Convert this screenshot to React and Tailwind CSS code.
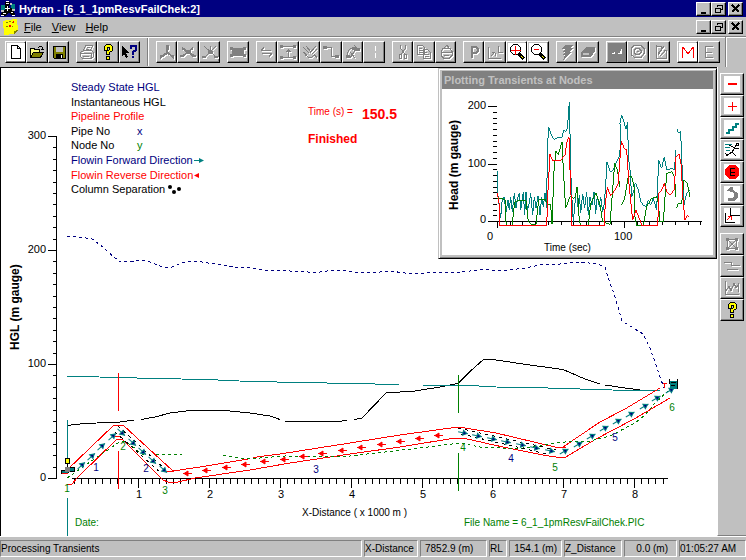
import clsx from 'clsx';

const UI_FONT = "font-['Liberation_Sans',Arial,sans-serif]";

/* Icons, all on a 16 x 16 grid */

function Icon({ children, dim }) {
  return (
    <svg
      viewBox="0 0 16 16"
      className={clsx('size-4 shrink-0', dim && 'drop-shadow-[1px_1px_0_#fff]')}
      fill="none"
      stroke={dim ? '#808080' : '#000'}
      shapeRendering="crispEdges"
      aria-hidden="true"
    >
      {children}
    </svg>
  );
}

const QuestionMark = () => (
  <Icon>
    <path d="M4.500 6.500v-4l2-2h4l2 2v4l-3 2v2h-3v-3l3-2v-2h-2v3z" fill="#ff0" />
    <path d="M6.500 12.500h3v3h-3z" fill="#ff0" />
  </Icon>
);

const icons = {
  newFile: (
    <Icon>
      <path d="M3.500 1.500h6l3 3v10h-9z" fill="#fff" />
      <path d="M9.500 1.500v3h3" />
    </Icon>
  ),
  open: (
    <Icon>
      <path d="M9 3.500h1M10 2.500h3M13.500 3v3M12 5.500h3" />
      <path d="M1.500 13.500v-9h4v1h5v3" fill="#ffff80" />
      <path d="M1.500 13.500l3-5h10l-3 5z" fill="#808000" />
    </Icon>
  ),
  save: (
    <Icon>
      <path d="M2.500 2.500h12v12h-11l-1-1z" fill="#808000" />
      <path d="M5 3h7v5H5z" fill="#c0c0c0" stroke="none" />
      <path d="M5 10h7v4H5z" fill="#000" stroke="none" />
      <path d="M10 11h1v3h-1z" fill="#fff" stroke="none" />
    </Icon>
  ),
  print: (
    <Icon dim>
      <path d="M4.500 6.500l2-5h7l-2 5M8 3.500h3M7 5.500h3M1.500 8.500l3-2h8l2 2v4l-2 2h-9l-2-2zM2 9.500h10M4 12.500h6M12.500 9v5" />
    </Icon>
  ),
  help: <QuestionMark />,
  contextHelp: (
    <Icon>
      <path d="M0 2v10l2-2 2 4 2-1-2-4h3z" fill="#000" stroke="none" />
      <path d="M9 5V2h5v4l-3 2v3M11 12v2" stroke="#000080" strokeWidth="2" />
    </Icon>
  ),
  node: (
    <Icon dim>
      <path d="M7 1h3v5H7z" fill="#808080" stroke="none" />
      <path d="M8 6v3l-6 4M9 9l5 4" strokeWidth="2" />
      <path d="M1.500 11v4M14.500 11v4" />
    </Icon>
  ),
  branch: (
    <Icon dim>
      <path d="M2 4l12 8M13 4L3 12" strokeWidth="2" />
      <path d="M7 6h4v4H7zM0 11h4v2H0zM12 11h4v2h-4z" fill="#808080" stroke="none" />
    </Icon>
  ),
  cross: (
    <Icon dim>
      <path d="M2 2l12 11M14 2L3 13" />
      <path d="M8.500 2v6" />
      <path d="M6 7h5v3H6zM0 12h4v2H0zM12 12h4v2h-4z" fill="#808080" stroke="none" />
    </Icon>
  ),
  pipe: (
    <Icon dim>
      <path d="M2 4h12v8H2zM0 3h3v3H0zM13 3h3v3h-3zM0 10h3v3H0zM13 10h3v3h-3z" fill="#808080" stroke="none" />
    </Icon>
  ),
  swap: (
    <Icon dim>
      <path d="M2 6.500h10M5 3.500l-3 3M3 9.500h10M10 12.500l3-3" />
    </Icon>
  ),
  spacing: (
    <Icon dim>
      <path d="M0 2.500h16M0 13.500h16M8.500 5v8M6 7.500h5M7 6.500h3" />
      <path d="M0 1h3v3H0zM13 1h3v3h-3zM0 12h3v3H0zM13 12h3v3h-3z" fill="#808080" stroke="none" />
    </Icon>
  ),
  hand: (
    <Icon dim>
      <path d="M1 3l6 6M4 2l5 6M14 2L8 9M15 5l-5 5M1 8l4 3M3 11l5 3 5-3M12 10l3 4" />
    </Icon>
  ),
  route: (
    <Icon dim>
      <path d="M3 3.500h5.500v9H14" />
      <path d="M0 2h4v3H0zM12 11h4v3h-4z" fill="#808080" stroke="none" />
    </Icon>
  ),
  rotate: (
    <Icon dim>
      <path d="M2 12c1-8 7-11 11-6M9 1l4 4M5 8l5 6M5 14l6-9" />
      <path d="M1 11h4v3H1zM11 4h4v3h-4zM7 3h3v3H7z" fill="#808080" stroke="none" />
    </Icon>
  ),
  dash: (
    <Icon>
      <path d="M9.500 2v5M9.500 9v5" stroke="#fff" />
    </Icon>
  ),
  cut: (
    <Icon dim>
      <path d="M5.500 1v3l5 7M10.500 1v3l-5 7" />
      <path d="M4.500 10.500h2v4h-2zM9.500 10.500h2v4h-2z" />
    </Icon>
  ),
  copy: (
    <Icon dim>
      <path d="M1.500 1.500h5l2 2v7h-7zM3 4.500h3M3 6.500h4M3 8.500h4" />
      <path d="M7.500 5.500h4l3 3v6h-7zM9 8.500h2M9 10.500h4M9 12.500h4" />
    </Icon>
  ),
  paste: (
    <Icon dim>
      <path d="M5 4.500h7l2 3v4l-3 3H6l-3-3v-4zM6 4l3-3 2 3M3 8.500h11M6 11.500h5" />
    </Icon>
  ),
  profile: (
    <Icon dim>
      <path d="M6 14V3h4l2 2v2l-2 2H6" strokeWidth="2" />
    </Icon>
  ),
  axes: (
    <Icon dim>
      <path d="M1.500 3v11H14M4 12l4-4M5 8.500h3M8.500 9v3M11.500 2v6H16" />
    </Icon>
  ),
  zoomIn: (
    <Icon>
      <path d="M4.500 .500h4l3 3v4l-3 3h-4l-3-3v-4z" fill="#fff" />
      <path d="M6.500 2v9M2 6.500h10" stroke="#f00" />
      <path d="M10 10l5 5" strokeWidth="3" />
      <path d="M12 12l2 2" stroke="#ff0" />
    </Icon>
  ),
  zoomOut: (
    <Icon>
      <path d="M4.500 .500h4l3 3v4l-3 3h-4l-3-3v-4z" fill="#fff" />
      <path d="M4 5.500h5" stroke="#f00" />
      <path d="M10 10l5 5" strokeWidth="3" />
      <path d="M12 12l2 2" stroke="#ff0" />
    </Icon>
  ),
  bolt: (
    <Icon dim>
      <path d="M6 1h8l-3 3h3l-3 4h2l-9 8 2-5H3l3-3H3l3-3H3z" fill="#808080" stroke="none" />
    </Icon>
  ),
  eraser: (
    <Icon dim>
      <path d="M6 3h9v4l-4 6H1V9z" fill="#808080" stroke="none" />
      <path d="M3 9h6v2H3z" fill="#c0c0c0" stroke="none" />
    </Icon>
  ),
  graph: (
    <Icon>
      <path d="M-1-1h18v18H-1z" fill="#808080" stroke="none" />
      <path d="M3 9h3v1H3zM5 8h1v1H5zM9 9h4v1H9zM11 7h2v2h-2zM12 5h1v2h-1z" fill="#fff" stroke="none" />
    </Icon>
  ),
  contour: (
    <Icon dim>
      <path d="M8 1.500h3l3 3v5l-3 4H5l-4-3v-6l3-3zM8 4.500H6l-2 2v2l2 2h3l2-2v-2l-2-2zM7 7.500h2" />
    </Icon>
  ),
  results: (
    <Icon dim>
      <path d="M4.500 1v13H15M5 2.500h4v4L6 9M12 2L6 11M12 6.500h2v7M8 12l5-5" />
    </Icon>
  ),
  m: (
    <Icon>
      <path d="M2.500 14V3M3 3l5 7 5-7M13.500 3v11" stroke="#f00" />
    </Icon>
  ),
  e: (
    <Icon dim>
      <path d="M12 2.500H4.500v11H12M5 8.500h6" />
    </Icon>
  ),
  minus: (
    <Icon>
      <path d="M4 8h9" stroke="#f00" strokeWidth="2" />
    </Icon>
  ),
  plus: (
    <Icon>
      <path d="M4 8.500h9M8.500 4v9" stroke="#f00" />
    </Icon>
  ),
  steps: (
    <Icon>
      <path d="M2 13h3v-3h4V7h3V4h3" stroke="#008080" strokeWidth="2" />
    </Icon>
  ),
  runner: (
    <Icon>
      <path d="M1 2.500h7M1 5.500h5M2 8.500h4" stroke="#008080" />
      <path d="M5 3l6 3 4 1M11 6l-3 4 4 4M8 10l-6 4M1 11l2 2M11 5l3-4M12.500 1.500h2v2h-2z" />
    </Icon>
  ),
  stop: (
    <Icon>
      <path d="M5 1h6l4 4v6l-4 4H5l-4-4V5z" fill="#f00" stroke="none" />
      <path d="M11 4.500H6.500v7H11M7 8.500h4" />
    </Icon>
  ),
  undo: (
    <Icon>
      <path d="M6 1L2 5h3l5 2v3l-2 2H4v3h6l4-3V7l-5-3V1z" fill="#808080" stroke="none" />
    </Icon>
  ),
  origin: (
    <Icon>
      <path d="M6.500 0v7H16M1.500 5v9.500H11" />
      <path d="M3 12l4-4M4 8.500h3.500V12" stroke="#f00" />
    </Icon>
  ),
  frame: (
    <Icon dim>
      <path d="M3.500 3.500h9v9h-9zM4 4l8 8M12 4l-8 8" />
      <path d="M2 2h3v3H2zM11 2h3v3h-3zM2 11h3v3H2zM11 11h3v3h-3z" fill="#808080" stroke="none" />
    </Icon>
  ),
  levels: (
    <Icon dim>
      <path d="M0 4.500h7M7.500 4v4M7 7.500h9M3 11.500h11" />
    </Icon>
  ),
  wave: (
    <Icon dim>
      <path d="M1.500 1v13.500H15M2 11l3-5 2 5 3-8 2 5 2-3v7" />
    </Icon>
  ),
  yellowHelp: <QuestionMark />,
};

const toolGroups = [
  { columns: 'grid-cols-[21px_22px_21px]', tools: ['newFile', 'open', 'save'] },
  { columns: 'grid-cols-[21px_22px_21px]', tools: ['print', 'help', 'contextHelp'] },
  { divider: true },
  { columns: 'grid-cols-[21px_22px_21px]', tools: ['node', 'branch', 'cross'] },
  { columns: 'grid-cols-[22px]', tools: ['pipe'] },
  {
    columns: 'grid-cols-[21px_22px_21px_22px_21px_22px]',
    tools: ['swap', 'spacing', 'hand', 'route', 'rotate', 'dash'],
  },
  { columns: 'grid-cols-[21px_22px_21px]', tools: ['cut', 'copy', 'paste'] },
  { columns: 'grid-cols-[21px_22px_21px_22px]', tools: ['profile', 'axes', 'zoomIn', 'zoomOut'] },
  { columns: 'grid-cols-[21px_22px]', tools: ['bolt', 'eraser'] },
  { columns: 'grid-cols-[21px_22px_21px]', tools: ['graph', 'contour', 'results'] },
  { columns: 'grid-cols-[21px_22px]', tools: ['m', 'e'] },
];

const whiteFace = ['newFile', 'zoomIn', 'zoomOut', 'm', 'minus', 'plus', 'steps', 'runner', 'stop', 'undo', 'origin'];

function ToolButton({ name, wide }) {
  return (
    <button
      type="button"
      aria-label={name}
      className={clsx(
        'flex h-[22px] items-center border border-t-white border-r-black border-b-black border-l-white bg-[#c0c0c0] p-px shadow-[inset_-1px_-1px_0_#808080]',
        wide && 'justify-center'
      )}
    >
      <span
        className={clsx(
          'block',
          !wide && 'p-px',
          name === 'graph' && 'bg-[#808080]',
          whiteFace.includes(name) && 'bg-white'
        )}
      >
        {icons[name]}
      </span>
    </button>
  );
}

function WindowButtons() {
  const face =
    'flex h-[14px] w-[15px] items-center justify-center border border-t-white border-l-white border-r-black border-b-black bg-[#c0c0c0] shadow-[inset_-1px_-1px_0_#808080]';
  return (
    <div className="flex pr-[3px]">
      <button type="button" aria-label="Minimize" className={face}>
        <svg viewBox="0 0 10 10" className="size-[10px]" shapeRendering="crispEdges">
          <path d="M2 8h5v2H2z" />
        </svg>
      </button>
      <button type="button" aria-label="Restore" className={face}>
        <svg viewBox="0 0 10 10" className="size-[10px]" fill="none" stroke="#000" shapeRendering="crispEdges">
          <path d="M3.500 3V1.500h5v4H7M3 1h6M1.500 4.500h5v4h-5zM1 4h6" />
        </svg>
      </button>
      <button type="button" aria-label="Close" className={clsx(face, 'ml-0.5')}>
        <svg viewBox="0 0 10 10" className="size-[10px]" stroke="#000" strokeWidth="2" shapeRendering="crispEdges">
          <path d="M1 1l7 7M8 1L1 8" />
        </svg>
      </button>
    </div>
  );
}

/* Main profile plot */

const forwardArrows = [
  [82, 465, -42], [92, 456, -42], [102, 446, -42], [113, 436, -42],
  [122, 433, 42], [133, 443, 42], [143, 452, 42], [153, 461, 42], [164, 470, 42],
  [464, 433, 12], [478, 436, 12], [493, 439, 12], [507, 442, 12], [522, 445, 12], [536, 448, 12], [551, 451, 12],
  [565, 451, -30], [579, 444, -30], [592, 436, -30], [605, 428, -30], [618, 421, -30],
  [631, 414, -30], [645, 406, -30], [657, 398, -30], [671, 390, -30],
];

const reverseArrows = [
  [187, 473], [206, 470], [226, 467], [245, 464], [264, 461], [284, 459], [303, 456],
  [322, 453], [342, 450], [361, 447], [381, 444], [400, 441], [419, 438], [438, 435],
];

const pipeLabels = [[96, 471, '1'], [146, 472, '2'], [316, 473, '3'], [511, 462, '4'], [615, 441, '5']];
const nodeLabels = [[67, 492, '1'], [123, 450, '2'], [165, 494, '3'], [463, 451, '4'], [555, 471, '5'], [672, 411, '6']];

const legend = [
  ['Steady State HGL', '#000080'],
  ['Instantaneous HGL', '#000'],
  ['Pipeline Profile', '#f00'],
  ['Pipe No', '#000'],
  ['Node No', '#000'],
  ['Flowin Forward Direction', '#000080'],
  ['Flowin Reverse Direction', '#f00'],
  ['Column Separation', '#000'],
];

function ProfilePlot() {
  const yTicks = Array.from({ length: 31 }, (_, i) => i);
  const xTicks = Array.from({ length: 84 }, (_, i) => i + 1);

  return (
    <svg
      viewBox="1 68 716 468"
      className="block h-auto w-full"
      fontFamily="'Liberation Sans', Arial, sans-serif"
      fontSize="11"
      role="img"
      aria-label="HGL profile"
    >
      {legend.map(([label, color], i) => (
        <text key={label} x="71" y={Math.round(91 + i * 14.6)} fill={color}>
          {label}
        </text>
      ))}
      <text x="137" y="135" fill="#000080">x</text>
      <text x="137" y="149" fill="#008000">y</text>
      <path d="M194 160.500h7" stroke="#008080" />
      <path d="M199 158l5 2.500-5 2.500z" fill="#008080" />
      <path d="M199 173v5l-5-2.500z" fill="#f00" />
      <circle cx="170" cy="187" r="2" />
      <circle cx="174" cy="192" r="2" />
      <circle cx="179" cy="189" r="2" />

      <text x="308" y="115" fill="#f00" fontSize="10">Time (s) =</text>
      <text x="362" y="119" fill="#f00" fontSize="14" fontWeight="bold">150.5</text>
      <text x="308" y="143" fill="#f00" fontSize="12" fontWeight="bold">Finished</text>

      {/* Axes */}
      <g stroke="#000" fill="none" shapeRendering="crispEdges">
        <path d="M56.500 136V479M72 478.500H668" />
        {yTicks.map((i) => {
          const y = Math.round(478 - i * 11.4) + 0.5;
          return <path key={i} d={`M${i % 10 === 0 ? 48 : 53} ${y}H56`} />;
        })}
        {xTicks.map((i) => {
          const x = Math.round(67 + i * 7.09) + 0.5;
          return <path key={i} d={`M${x} 478V${i % 10 === 0 ? 488 : 484}`} />;
        })}
      </g>
      <g textAnchor="end">
        <text x="46" y="139">300</text>
        <text x="46" y="253">200</text>
        <text x="46" y="367">100</text>
        <text x="46" y="481">0</text>
      </g>
      <g textAnchor="middle">
        {[1, 2, 3, 4, 5, 6, 7, 8].map((n) => (
          <text key={n} x={Math.round(68 + n * 70.9)} y="498">{n}</text>
        ))}
      </g>
      <text x="302" y="516" fontSize="10">X-Distance ( x 1000 m )</text>
      <text transform="translate(19 350) rotate(-90)" fontWeight="bold" fontSize="12">HGL (m gauge)</text>

      {/* Head lines and pipe profile */}
      <g fill="none" shapeRendering="crispEdges">
        <path
          d="M67 236l12 1 13 2 11 8 5 5 12 10 15-1 10-1 15 6 10 2 12-5 13-2 20 3 20 3 15 1 13 2 27 1 18 1h12l15-2h7l18 3 20-1 10-1 15 2h20l10-1 15 1 20-2 15-2 10 2 15-1 15-2 15-3 20-1 20-2 17 2 8 3 3 10 7 20 7 24 13 8 8 5 7 14 6 17 4 12 4 11"
          stroke="#000080"
          strokeDasharray="3 3"
        />
        <path
          d="M67 425.500l18-2 35-1.500 14-2M141 419.500l14-2.500 15-4 20-2.500h35l25 2.500 20 3 10 3.500M285 421h57l5-1M354 419.500l8-1.500 24-25 14-1 15-1 25-4 18-3.500 12-12 14-12.500 12 1 34 5 33 4.500 22 9.500 15 5M605 385l20 3 15 2"
          stroke="#000"
        />
        <path
          d="M67 376.500h13l38 1 37 1 52 1 43 2 53 1 47 1 49 1M423 385.500h47l26 1.500 52 1 64 2 48 1h8M67.500 420v42M67.500 498v38"
          stroke="#008080"
        />
        <path d="M118.500 373v38M118.500 451v38" stroke="#f00" />
        <path d="M458.500 375v38M458.500 453v38" stroke="#008000" />
        <path
          d="M66 471l48-46h9l50 46 27-4 48-8M253 457.500l27-3.500 70-11 50-8 58-8 7 1 31 5 59 14h8l37-25 25-13 30-18 5-3"
          stroke="#f00"
        />
        <path
          d="M67 484h5l6-7 39-38h5l41 41 5 2h10l17-4 55-8 40-7 60-9 50-7 55-9h8l33 7.500 49 10 11 1.500h10l30-18 38-20 36-21M165 471h9M556 447.500h10M113 436h8M454 438h10"
          stroke="#f00"
        />
        <path
          d="M67 478l23-16 28-19 7-2 20 15M156 454.500h26M223 455l24 4 13-1 25-2 45 1 20-1 35-4 35-4 40-5 20 4 20 1 15 1 25-3 15-3 10-1 25-1 20-5 25-13 10-8 10-12 13-12"
          stroke="#008000"
          strokeDasharray="3 3"
        />
        <path d="M118 426l48 44M115 432l46 41M458 428l98 22M461 434l86 20" stroke="#000" strokeDasharray="3 4" />
      </g>

      {forwardArrows.map(([x, y, angle]) => (
        <g key={x} transform={`translate(${x} ${y}) rotate(${angle})`}>
          <path d="M-6 0H4" stroke="#008080" />
          <path d="M-1-2.500L3 0l-4 2.500z" fill="#000080" stroke="#008080" />
        </g>
      ))}
      {reverseArrows.map(([x, y]) => (
        <g key={x} transform={`translate(${x} ${y})`} fill="#f00" stroke="#f00">
          <path d="M-4 .500H5" shapeRendering="crispEdges" />
          <path d="M1-2L-3 .500 1 3z" />
        </g>
      ))}

      {/* Pump at the first node, tank at the last */}
      <g shapeRendering="crispEdges">
        <path d="M65.500 458.500h4v5h-4z" fill="#ff0" stroke="#000" />
        <path d="M67.500 464v4" stroke="#000" />
        <path d="M61 470h4l3-3h6v4h-4l-2 2h-7z" fill="#008080" stroke="#000" />
        <path d="M65 467h5v5h-5z" fill="#808080" />
        <path d="M62 473h6" stroke="#f00" />
        <path d="M670 381v8h8v-8z" fill="#008080" />
        <path d="M669.500 379v5M677.500 379v10M671 382.500h5M671 385.500h4" stroke="#000" />
        <path d="M664.500 383v5M663 383.500h4" stroke="#f00" />
      </g>

      <g textAnchor="middle" fontSize="10">
        {pipeLabels.map(([x, y, n]) => (
          <text key={n} x={x} y={y} fill="#000080">{n}</text>
        ))}
        {nodeLabels.map(([x, y, n]) => (
          <text key={n} x={x} y={y} fill="#008000">{n}</text>
        ))}
      </g>
      <text x="75" y="526" fill="#008000" fontSize="10">Date:</text>
      <text x="464" y="526" fill="#008000" fontSize="10">File Name = 6_1_1pmResvFailChek.PIC</text>
    </svg>
  );
}

/* Floating transient plot */

function TransientPlot() {
  const yTicks = Array.from({ length: 21 }, (_, i) => i);
  const xTicks = Array.from({ length: 17 }, (_, i) => i);

  return (
    <svg
      viewBox="442 89 271 166"
      className="block h-auto w-full bg-white"
      fontFamily="'Liberation Sans', Arial, sans-serif"
      fontSize="11"
      role="img"
      aria-label="Head against time"
    >
      <g stroke="#000" shapeRendering="crispEdges">
        <path d="M489 221.500H702" />
        {yTicks.map((i) => {
          const y = Math.round(221 - i * 5.75) + 0.5;
          return <path key={i} d={`M${i % 10 === 0 ? 488 : 493} ${y}H497`} />;
        })}
        {xTicks.map((i) => {
          const x = Math.round(497 + i * 12.7) + 0.5;
          return <path key={i} d={`M${x} 222V${i % 10 === 0 ? 228 : 225}`} />;
        })}
      </g>
      <g textAnchor="end">
        <text x="486" y="109">200</text>
        <text x="486" y="167">100</text>
        <text x="486" y="223">0</text>
      </g>
      <text x="487" y="240">0</text>
      <text x="614" y="240">100</text>
      <text x="544" y="251" fontSize="10">Time (sec)</text>
      <text transform="translate(458 210) rotate(-90)" fontWeight="bold" fontSize="12">
        Head (m gauge)
      </text>

      {/* Traces are digitised at three units to the pixel */}
      <g transform="translate(480 90) scale(0.3333)" fill="none" strokeWidth="3" shapeRendering="crispEdges">
        <polyline
          stroke="#008080"
          points="52,242 52,300 58,350 62,385 66,335 72,320 78,365 84,330 88,360 92,320 97,365 103,310 108,355 114,320 118,308 122,360 130,306 134,375 138,305 142,360 148,340 152,310 158,375 163,320 168,355 174,318 180,375 185,320 190,350 195,308 200,355 202,180 206,112 212,130 222,148 235,142 245,143 252,120 256,125 262,115 265,80 268,35 270,130 272,240 276,330 280,395 284,350 290,290 294,350 298,315 302,370 308,312 314,355 320,305 325,375 330,320 336,345 342,306 347,372 352,318 358,350 362,320 368,365 372,345 376,300 381,217 392,247 400,240 410,215 418,200 422,160 420,100 425,76 432,95 438,118 443,95 445,200 450,240 455,320 462,300 466,278 475,300 482,335 490,345 498,350 505,330 512,345 520,325 530,360 536,210 545,235 553,200 560,240 575,235 583,240 588,180"
        />
        <polyline stroke="#008080" points="590,116 596,130 602,125 605,200 608,270 612,345 620,310 630,300" />
        <polyline
          stroke="#008000"
          points="52,325 75,328 78,395 82,408 96,408 104,335 120,330 138,332 145,395 155,405 168,402 176,330 195,328 205,345 212,345 216,402 222,245 228,182 235,195 246,155 250,240 257,355 270,320 280,325 286,320 291,290 295,340 298,395 305,408 325,408 332,340 348,308 360,345 368,395 390,403 398,300 404,220 412,240 420,290"
        />
        <polyline
          stroke="#008000"
          points="424,345 434,325 445,260 455,260 462,290 465,380 470,408 490,408 500,350 515,325 530,320 535,340 540,395 550,395 560,250 575,245 584,260 587,320"
        />
        <polyline stroke="#008000" points="589,355 595,340 605,340 612,270 622,280 630,320" />
        <polyline
          stroke="#f00"
          points="52,310 58,345 60,408 200,408 204,300 210,192 218,212 240,213 255,195 262,150 267,142 270,240 274,340 276,408 372,408 376,340 382,292 392,317 405,300 415,280 418,230 424,153 434,178 440,180 446,270 455,360 458,390 468,360 478,385 486,408 533,408 537,310 545,300 553,280 560,305 570,315 583,300 588,200 597,192 603,220 610,340 615,390 622,375 627,382"
        />
      </g>
    </svg>
  );
}

function TransientWindow() {
  return (
    <section className="absolute top-0 right-0 w-[279px] border border-t-[#c0c0c0] border-l-[#c0c0c0] border-r-black border-b-black bg-[#c0c0c0] shadow-[inset_1px_1px_0_#fff,inset_-1px_-1px_0_#808080]">
      <div className="p-[3px] pt-0.5">
        <h2 className="bg-[#808080] px-0.5 text-[11px] leading-[18px] font-bold text-[#c0c0c0]">
          Plotting Transients at Nodes
        </h2>
        <TransientPlot />
      </div>
    </section>
  );
}

const statusCells = [
  { text: 'Processing Transients', className: 'flex-1' },
  { text: 'X-Distance', className: 'w-[54px]' },
  { text: '7852.9 (m)', className: 'w-[67px] px-1' },
  { text: 'RL', className: 'w-[18px]' },
  { text: '154.1 (m)', className: 'w-[53px] px-1 text-right' },
  { text: 'Z_Distance', className: 'w-[58px]' },
  { text: '0.0 (m)', className: 'w-[53px] px-2 text-right' },
  { text: '01:05:27 AM', className: 'w-[67px]' },
];

export default function App() {
  return (
    <div className={clsx('flex min-h-screen flex-col bg-[#c0c0c0] text-[11px] text-black', UI_FONT)}>
      {/* Title bar */}
      <header className="flex h-[17px] items-center bg-[#000080] text-white">
        <svg viewBox="0 0 16 16" className="size-4" shapeRendering="crispEdges" aria-hidden="true">
          <path d="M1 4h4v5H1zM11 3h4v7h-4z" fill="#008080" />
          <path d="M5 1h5v3H9v3h3l3 6v2h-3l-3-4-4 4H1v-2l4-5V4z" fill="#000" />
          <path d="M6 2h3v1H6zM7 5h1v5H7zM3 12h3v1H3zM11 11h2v1h-2zM5 7h5v1H5zM6 0h3v1H6zM1 14h3v1H1zM12 14h3v1h-3z" fill="#fff" />
          <path d="M1 9h3v2H1zM12 8h3v2h-3zM10 2h2v2h-2z" fill="#c0c0c0" />
        </svg>
        <h1 className="flex-1 pl-[3px] text-[11px] leading-4 font-bold">Hytran - [6_1_1pmResvFailChek:2]</h1>
        <WindowButtons />
      </header>

      {/* Menu bar */}
      <nav className="flex h-[19px] items-center">
        <svg viewBox="0 0 16 16" className="ml-[3px] size-4" shapeRendering="crispEdges" aria-hidden="true">
          <path d="M0 2l3-1 11-1 1 11-4 4-10 1z" fill="#ff0" />
          <path d="M15 11l-4 4v-3z" fill="#808000" />
          <path d="M3 3h2v1H3zM6 2h2v1H6zM9 3h2v1H9zM3 7h2v1H3zM9 7h1v1H9z" fill="#808000" />
          <path d="M6 6h2v2H6zM10 2h1v2h-1z" fill="#f00" />
        </svg>
        <div className="flex flex-1 gap-2.5 pl-[5px] text-[11px] leading-4">
          <button type="button"><u>F</u>ile</button>
          <button type="button"><u>V</u>iew</button>
          <button type="button"><u>H</u>elp</button>
        </div>
        <WindowButtons />
      </nav>

      {/* Toolbar */}
      <div className="flex h-[31px] border-t border-[#808080] shadow-[inset_0_1px_0_#fff]">
        <div className="flex items-center gap-[7px] border-r border-[#808080] px-[5px]">
          {toolGroups.map((group, i) =>
            group.divider ? (
              <div key={i} className="h-7 w-0.5 border-l border-[#808080] bg-white" />
            ) : (
              <div key={i} className={clsx('grid', group.columns)}>
                {group.tools.map((name) => (
                  <ToolButton key={name} name={name} />
                ))}
              </div>
            )
          )}
        </div>
        <div className="w-px bg-white" />
      </div>

      {/* Work area */}
      <div className="flex flex-1">
        <main className="relative flex-1 border-t border-l border-black bg-white">
          <ProfilePlot />
          <TransientWindow />
        </main>
        <aside className="flex w-[29px] flex-col gap-1.5 border-b border-l border-b-[#808080] border-l-white px-0.5 pt-1.5">
          <div className="grid w-6">
            {['minus', 'plus', 'steps', 'runner', 'stop', 'undo', 'origin'].map((name) => (
              <ToolButton key={name} name={name} wide />
            ))}
          </div>
          <div className="grid w-6">
            {['frame', 'levels', 'wave', 'yellowHelp'].map((name) => (
              <ToolButton key={name} name={name} wide />
            ))}
          </div>
        </aside>
      </div>

      {/* Status bar */}
      <footer className="flex h-6 items-center gap-0.5 border-t border-white">
        {statusCells.map((cell) => (
          <div
            key={cell.text}
            className={clsx(
              'border border-t-[#808080] border-l-[#808080] border-r-white border-b-white text-[10px] leading-[15px] whitespace-nowrap',
              cell.className
            )}
          >
            {cell.text}
          </div>
        ))}
      </footer>
    </div>
  );
}
